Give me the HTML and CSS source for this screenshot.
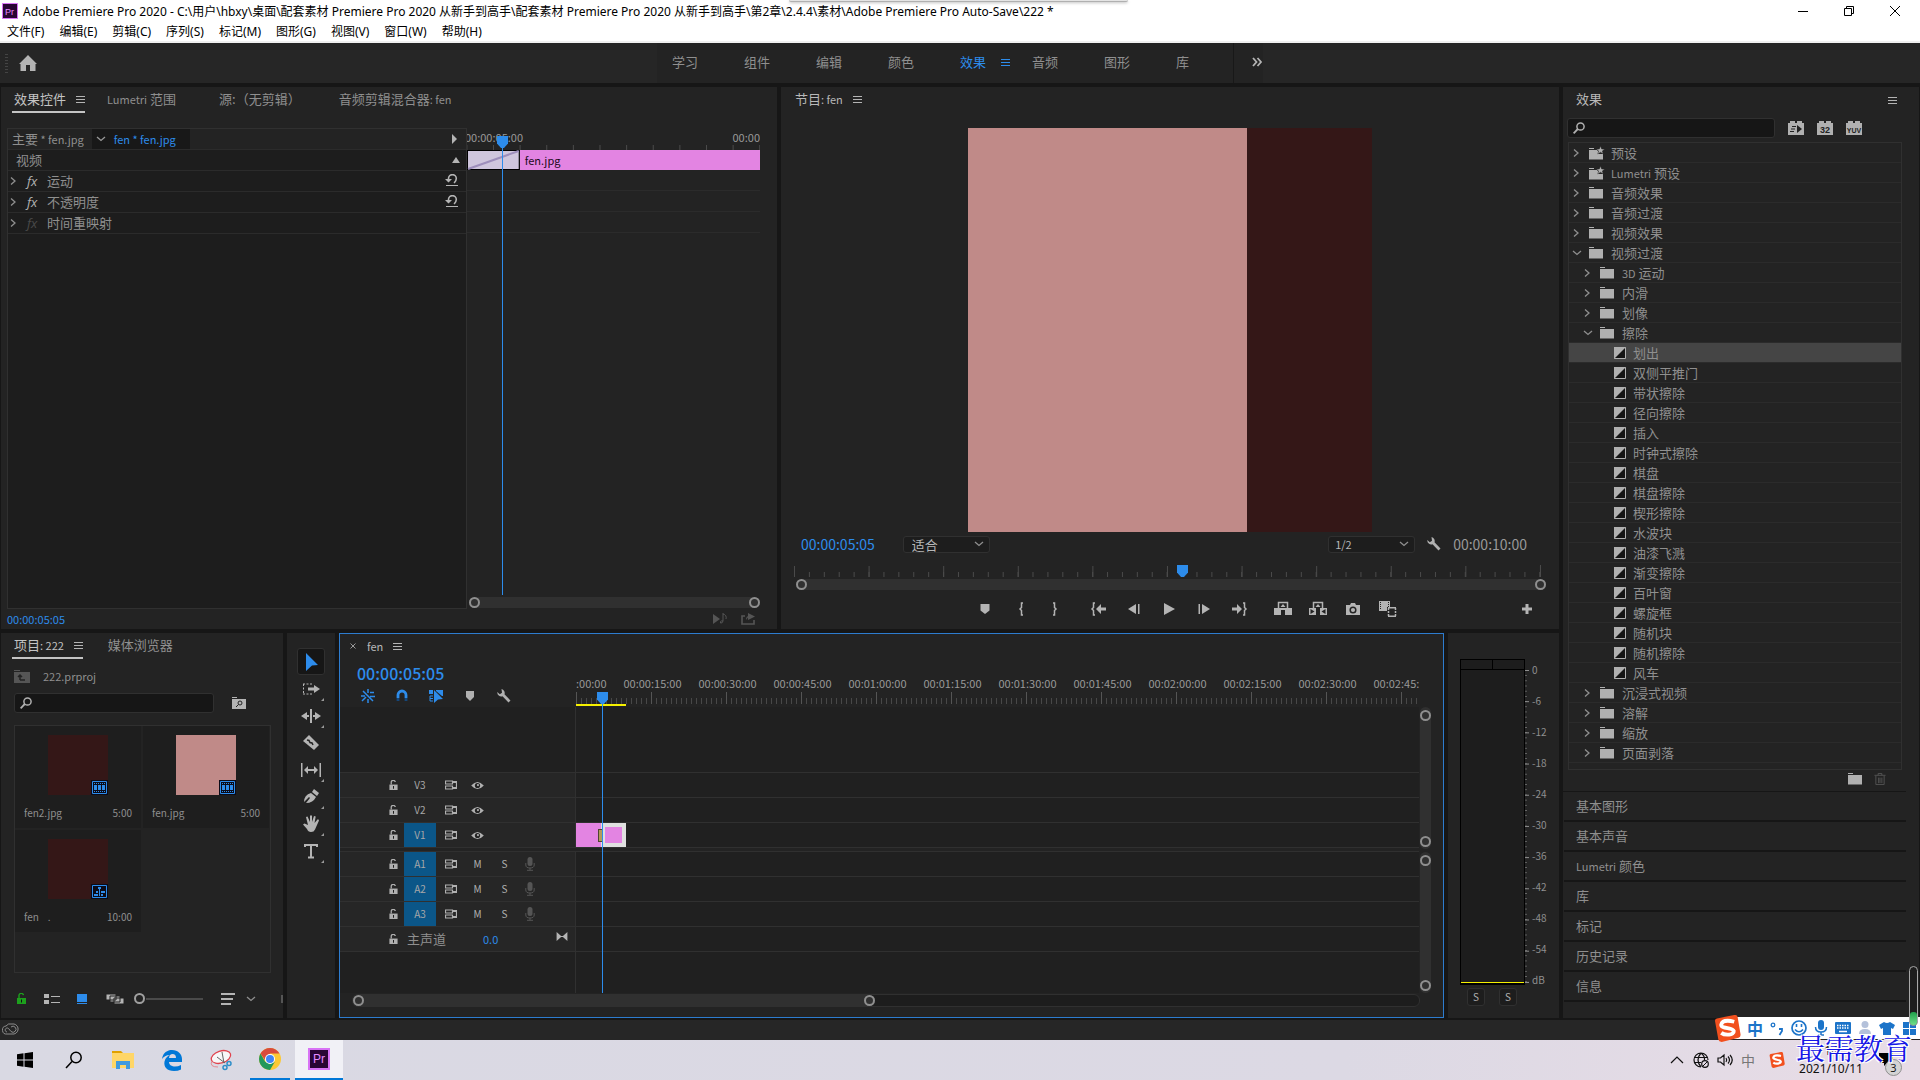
FILE: index.html
```html
<!DOCTYPE html>
<html lang="zh-CN">

<head>
  <meta charset="UTF-8">
  <meta name="viewport" content="width=device-width, initial-scale=1.0">
  <title>Adobe Premiere Pro 2020</title>
  <link rel="stylesheet" href="styles.css">
</head>

<body>
  <!-- icon sprite -->
  <svg class="sprite" aria-hidden="true">
    <symbol id="menu" viewBox="0 0 9 9"><path d="M0 1.5h9M0 4.5h9M0 7.5h9" stroke="currentColor" fill="none"/></symbol>
    <symbol id="right" viewBox="0 0 8 10"><path d="M2 1.5l4 3.5-4 3.5" stroke="currentColor" stroke-width="1.3" fill="none"/></symbol>
    <symbol id="down" viewBox="0 0 10 8"><path d="M1 2l4 3.500 4-3.500" stroke="currentColor" stroke-width="1.3" fill="none"/></symbol>
    <symbol id="folder" viewBox="0 0 14 12"><path d="M0 0h5v1H0zM0 2h14v9.500H0z" fill="currentColor"/></symbol>
    <symbol id="preset" viewBox="0 0 16 14"><path d="M0 2h5v1H0zM0 4h8l2 2v2h4v5.500H0z" fill="currentColor"/><path d="M11.500 0l1.200 3 3 .1-2.300 1.900.8 3-2.700-1.700L8.800 8l.8-3-2.300-1.900 3-.1z" fill="currentColor" stroke="#232323" stroke-width=".5"/></symbol>
    <symbol id="trans" viewBox="0 0 12 12"><path d="M.5.5h11v11H.5z" fill="#141414" stroke="currentColor"/><path d="M0 0h12L0 12z" fill="currentColor"/></symbol>
    <symbol id="search" viewBox="0 0 12 12"><circle cx="7.500" cy="4.500" r="3.600" stroke="currentColor" stroke-width="1.500" fill="none"/><path d="M4.800 7L.6 11.300" stroke="currentColor" stroke-width="1.800"/></symbol>
    <symbol id="reset" viewBox="0 0 14 12"><path d="M3.500 6V4.500a3.800 3.800 0 0 1 7.800 0c0 2-.8 3-2.200 4.500" stroke="currentColor" stroke-width="1.600" fill="none"/><path d="M0 5h7L3.500 8.500zM1 11h12v1H1z" fill="currentColor"/></symbol>
    <symbol id="wrench" viewBox="0 0 14 14"><path d="M4.500 0a4 4 0 0 1 3 5.200l6 6.300-2 2-6-6.300A4 4 0 0 1 .3 3l2.500 2.200L5 3.800 4.700 1.500z" fill="currentColor"/></symbol>
    <symbol id="marker" viewBox="0 0 10 10"><path d="M1 0h8v6L5 10 1 6z" fill="currentColor"/></symbol>
    <symbol id="head" viewBox="0 0 11 12"><path d="M0 0h11v7.500L7 12H4L0 7.500z" fill="currentColor"/></symbol>
    <symbol id="bin" viewBox="0 0 12 13"><path d="M0 2.500h12M4 2.500v-2h4v2M1.500 3v9.500h9V3M4.500 5v6M6 5v6M8 5v6" stroke="currentColor" fill="none"/></symbol>
    <symbol id="lock" viewBox="0 0 9 11"><path d="M0 5h9v6H0z" fill="currentColor"/><path d="M2 5V3a2.200 2.200 0 0 1 4.500-.8" stroke="currentColor" stroke-width="1.400" fill="none"/><path d="M4 6.500h1v3H4z" fill="#111"/></symbol>
    <symbol id="sync" viewBox="0 0 12 10"><path d="M.5 1h7v3h-7zM.5 6h7v3h-7zM7.500 1.500h4v7h-4" stroke="currentColor" stroke-width="1.200" fill="none"/><path d="M8 1h3.500v2H8zM8 7h3.500v2H8z" fill="currentColor"/></symbol>
    <symbol id="eye" viewBox="0 0 14 10"><path d="M0 5q7-8 14 0-7 8-14 0z" fill="currentColor"/><circle cx="7" cy="5" r="2.900" fill="#232323"/><circle cx="7.500" cy="4.500" r="1.200" fill="currentColor"/></symbol>
    <symbol id="mic" viewBox="0 0 10 14"><rect x="2.500" width="5" height="9" rx="2.500" fill="currentColor"/><path d="M.8 6v2q0 3 4.200 3t4.200-3V6M5 11v2M2 13.300h6" stroke="currentColor" fill="none"/></symbol>
    <symbol id="film" viewBox="0 0 17 15"><path d="M0 0h17v15H0z" fill="#0b0b18"/><path d="M1.500 1.500h14v12h-14z" stroke="currentColor" fill="none"/><path d="M3 5h3v5H3zM7 5h3v5H7zM11 5h3v5h-3z" fill="currentColor"/><path d="M3 3.500h11M3 11.500h11" stroke="currentColor" stroke-dasharray="1 1"/></symbol>
    <symbol id="seq" viewBox="0 0 17 15"><path d="M0 0h17v15H0z" fill="#0b0b18"/><path d="M1.500 1.500h14v12h-14z" stroke="currentColor" fill="none"/><path d="M7 3h3v2H9v7H8V5H7zM5 7h2v2H5zM10 7h4v2h-4zM3 10h4v2H3zM10 10h2v2h-2z" fill="currentColor"/></symbol>
    <symbol id="sogou" viewBox="0 0 28 28"><path d="M1 6Q1 4 3 3.500L21 0q3-.3 3.500 2l3 18q.3 3-2 3.500L8 28q-3 0-3.500-2.500z" fill="#f2501e"/><path d="M21 7Q9 4 7.500 10c-.5 4 12 3 13 6.500.5 4.500-9 5-13 2" stroke="#fff" stroke-width="4" fill="none"/></symbol>
  </svg>

  <header class="titlebar">
    <svg class="pr-mini" viewBox="0 0 16 16"><path d="M.5.5h15v15H.5z" fill="#2a0634" stroke="#d873f5"/><text x="3" y="12">Pr</text></svg>
    <h1>Adobe Premiere Pro 2020 - C:\用户\hbxy\桌面\配套素材 Premiere Pro 2020 从新手到高手\配套素材 Premiere Pro 2020 从新手到高手\第2章\2.4.4\素材\Adobe Premiere Pro Auto-Save\222 *</h1>
    <div class="win-buttons">
      <button type="button" aria-label="最小化"><svg viewBox="0 0 10 10"><path d="M0 5.500h10" stroke="#000"/></svg></button>
      <button type="button" aria-label="还原"><svg viewBox="0 0 10 10"><path d="M.5 2.500h7v7h-7zM2.500 2.500v-2h7v7h-2" stroke="#000" fill="none"/></svg></button>
      <button type="button" aria-label="关闭"><svg viewBox="0 0 10 10"><path d="M0 0l10 10M10 0L0 10" stroke="#000"/></svg></button>
    </div>
    <div class="dock-tab"></div>
  </header>
  <nav class="menubar">
    <button type="button">文件(F)</button>
    <button type="button">编辑(E)</button>
    <button type="button">剪辑(C)</button>
    <button type="button">序列(S)</button>
    <button type="button">标记(M)</button>
    <button type="button">图形(G)</button>
    <button type="button">视图(V)</button>
    <button type="button">窗口(W)</button>
    <button type="button">帮助(H)</button>
  </nav>

  <nav class="workspaces">
    <div class="home">
      <span class="grip"></span>
      <button type="button" aria-label="主页"><svg viewBox="0 0 18 16"><path d="M9 0l9 9h-1.500v7H11v-6H7v6H1.500V9H0z" fill="#b4b4b4"/></svg></button>
    </div>
    <div class="ws-tabs">
      <button type="button">学习</button>
      <button type="button">组件</button>
      <button type="button">编辑</button>
      <button type="button">颜色</button>
      <button type="button" class="active">效果<svg class="i-menu"><use href="#menu"/></svg></button>
      <button type="button">音频</button>
      <button type="button">图形</button>
      <button type="button">库</button>
      <button type="button" class="more" aria-label="更多"><svg viewBox="0 0 10 8"><path d="M1 0l3.500 4L1 8M5.500 0L9 4 5.500 8" stroke="#b4b4b4" stroke-width="1.800" fill="none"/></svg></button>
    </div>
  </nav>

  <main class="desk">
    <div class="left-area">
      <section class="panel effect-controls">
        <div class="tabs">
          <button type="button" class="active">效果控件<svg class="i-menu"><use href="#menu"/></svg></button>
          <button type="button" class="tab-lumetri"><span class="latin">Lumetri</span> 范围</button>
          <button type="button" class="tab-source">源:（无剪辑）</button>
          <button type="button" class="tab-mixer">音频剪辑混合器<span class="latin">: fen</span></button>
        </div>
        <div class="ec-body">
          <div class="ec-list">
            <div class="ec-row ec-clip">
              <span>主要<span class="latin"> * fen.jpg</span></span>
              <span class="ec-current"><svg class="i-down"><use href="#down"/></svg>fen * fen.jpg</span>
              <svg class="ec-tri" viewBox="0 0 8 10"><path d="M2 0l5 5-5 5z" fill="#b4b4b4"/></svg>
            </div>
            <div class="ec-row ec-video">视频<svg class="ec-tri" viewBox="0 0 8 10"><path d="M0 8l4-6 4 6z" fill="#b4b4b4"/></svg></div>
            <div class="ec-row"><svg class="i-right"><use href="#right"/></svg><i>fx</i>运动<svg class="i-reset"><use href="#reset"/></svg></div>
            <div class="ec-row"><svg class="i-right"><use href="#right"/></svg><i>fx</i>不透明度<svg class="i-reset"><use href="#reset"/></svg></div>
            <div class="ec-row"><svg class="i-right"><use href="#right"/></svg><i class="off">fx</i>时间重映射</div>
          </div>
          <div class="ec-time">
            <div class="ec-ruler"><span>00:00:05:00</span><span>00:00</span></div>
            <div class="ec-clips">
              <svg class="ec-transition" viewBox="0 0 52 20" preserveAspectRatio="none"><path d="M.5.5h51v19H.5z" fill="#cfc6dd" stroke="#000"/><path d="M1 19L51 1" stroke="#9d8ebb" stroke-width="2"/></svg>
              <span class="ec-clipbar">fen.jpg</span>
            </div>
            <div class="ec-lane"></div>
            <div class="ec-lane"></div>
            <div class="ec-lane"></div>
            <div class="ec-rest"></div>
            <div class="scroll"><span class="knob"></span><span class="knob"></span></div>
            <div class="playhead"><svg><use href="#head"/></svg></div>
          </div>
        </div>
        <div class="ec-foot">
          <span>00:00:05:05</span>
          <svg viewBox="0 0 14 12"><path d="M0 1l7 5-7 5z" fill="#555"/><path d="M10 0v8q-.5 2.500-2.500 2V8.500q1-1 2.500-.5M10 1q4 1 3 5" stroke="#555" fill="none"/></svg>
          <svg viewBox="0 0 14 12"><path d="M4 3H1v8h12V7" stroke="#555" stroke-width="1.600" fill="none"/><path d="M7 0l7 3.500-7 3.500zM5 7q0-4 3-4" fill="#555"/></svg>
        </div>
      </section>

      <section class="panel program">
        <div class="tabs">
          <button type="button" class="plain">节目<span class="latin">: fen</span><svg class="i-menu"><use href="#menu"/></svg></button>
        </div>
        <div class="monitor"><div class="frame"></div></div>
        <div class="pg-info">
          <span class="tc blue">00:00:05:05</span>
          <label class="select-box" aria-label="缩放级别"><select><option>适合</option></select><svg class="i-down"><use href="#down"/></svg></label>
          <label class="select-box res" aria-label="回放分辨率"><select><option>1/2</option></select><svg class="i-down"><use href="#down"/></svg></label>
          <button type="button" aria-label="设置"><svg class="i14"><use href="#wrench"/></svg></button>
          <span class="tc">00:00:10:00</span>
        </div>
        <div class="pg-ruler"><div class="playhead"><svg><use href="#head"/></svg></div></div>
        <div class="scroll"><span class="knob"></span><span class="knob"></span></div>
        <div class="transport">
          <div class="keys">
            <button type="button" aria-label="添加标记"><svg viewBox="0 0 20 16"><path d="M5.500 3h9v6.500L10 13 5.500 9.500z"/></svg></button>
            <button type="button" aria-label="标记入点"><svg viewBox="0 0 20 16"><path class="line" d="M13 2h-1.500v4.500L10 8l1.500 1.500V14H13"/></svg></button>
            <button type="button" aria-label="标记出点"><svg viewBox="0 0 20 16"><path class="line" d="M8 2h1.500v4.500L11 8 9.500 9.500V14H8"/></svg></button>
          </div>
          <div class="keys">
            <button type="button" aria-label="转到入点"><svg viewBox="0 0 20 16"><path class="line" d="M6 2H4.500v4.500L3 8l1.500 1.500V14H6"/><path d="M7 8l5-5v3.500h5v3h-5V13z"/></svg></button>
            <button type="button" aria-label="后退一帧"><svg viewBox="0 0 20 16"><path d="M4 8l8-5v10zM14 3h1.500v10H14z"/></svg></button>
            <button type="button" aria-label="播放"><svg viewBox="0 0 20 16"><path d="M5 2l11 6-11 6z"/></svg></button>
            <button type="button" aria-label="前进一帧"><svg viewBox="0 0 20 16"><path d="M16 8L8 3v10zM4.500 3H6v10H4.500z"/></svg></button>
            <button type="button" aria-label="转到出点"><svg viewBox="0 0 20 16"><path class="line" d="M14 2h1.500v4.500L17 8l-1.500 1.500V14H14"/><path d="M13 8L8 3v3.500H3v3h5V13z"/></svg></button>
          </div>
          <div class="keys">
            <button type="button" aria-label="提升"><svg viewBox="0 0 20 16"><path d="M1 7h7v7H1zM12 7h7v7h-7z"/><path class="line" d="M5.500 7V1.500h9V7"/><path d="M7.500 6L10 3l2.500 3zM8 7h4v2H8z"/></svg></button>
            <button type="button" aria-label="提取"><svg viewBox="0 0 20 16"><path d="M1 7h7v7H1zM12 7h7v7h-7z"/><path class="line" d="M5.500 7V1.500h9V7"/><path d="M7.500 6L10 3l2.500 3z"/><path fill="#232323" d="M2.500 8l4 2.500-4 2.500zM17.500 8l-4 2.500 4 2.500z"/></svg></button>
            <button type="button" aria-label="导出帧"><svg viewBox="0 0 20 16"><path d="M3 4h4l1-2h4l1 2h4v10H3z"/><circle cx="10" cy="9" r="2.800" fill="#b4b4b4" stroke="#232323" stroke-width="1.500"/></svg></button>
            <button type="button" aria-label="比较视图"><svg viewBox="0 0 20 16"><path d="M1 0h11v10H1z"/><path d="M2.500 1v8M10.500 1v8" stroke="#232323" stroke-dasharray="1 1"/><path d="M9 6h10v10H9z" fill="#232323"/><path class="line" d="M10.500 7v8.500M17.500 7v8.500" stroke-dasharray="2 1"/><path class="line" d="M10 6.700h8M10 15.300h8"/></svg></button>
          </div>
          <button type="button" class="add" aria-label="按钮编辑器"><svg viewBox="0 0 12 12"><path d="M4.500 1h3v3.500H11v3H7.500V11h-3V7.500H1v-3h3.500z"/></svg></button>
        </div>
      </section>

      <div class="bottom-row">
        <section class="panel project">
          <div class="tabs">
            <button type="button" class="active">项目<span class="latin">: 222</span><svg class="i-menu"><use href="#menu"/></svg></button>
            <button type="button" class="tab-media">媒体浏览器</button>
          </div>
          <div class="pj-path"><svg viewBox="0 0 16 13"><path d="M0 0h6v1H0zM0 2h16v11H0z" fill="#555"/><path d="M6 10V5M4 7l2-2 2 2M6 10h5" stroke="#222" fill="none" stroke-width="1.500"/></svg>222.prproj</div>
          <div class="pj-search">
            <label class="search-box" aria-label="搜索项目"><svg class="i12"><use href="#search"/></svg><input type="text"></label>
            <button type="button" aria-label="从查询创建新搜索素材箱"><svg viewBox="0 0 14 12"><path d="M0 0h5v1H0zM0 2h14v10H0z" fill="#b4b4b4"/><circle cx="8" cy="6" r="2" stroke="#222" fill="none"/><path d="M6.500 7.500L4 10" stroke="#222"/></svg></button>
          </div>
          <div class="pj-grid">
            <figure>
              <div class="thumb dark"><svg><use href="#film"/></svg></div>
              <figcaption><span>fen2.jpg</span><span>5:00</span></figcaption>
            </figure>
            <figure>
              <div class="thumb pink"><svg><use href="#film"/></svg></div>
              <figcaption><span>fen.jpg</span><span>5:00</span></figcaption>
            </figure>
            <figure>
              <div class="thumb dark"><svg><use href="#seq"/></svg></div>
              <figcaption><span>fen</span><span class="dot">.</span><span>10:00</span></figcaption>
            </figure>
          </div>
          <div class="pj-foot">
            <svg class="pj-lock"><use href="#lock"/></svg>
            <button type="button" aria-label="列表视图"><svg viewBox="0 0 16 12"><path d="M0 1h5v4H0zM0 7h5v4H0zM7 3h9v1H7zM7 9h9v1H7z" fill="#b4b4b4"/></svg></button>
            <button type="button" aria-label="图标视图"><svg viewBox="0 0 16 12"><path d="M2 1h10v8H2zM2 10h10v1H2z" fill="#2d8ceb"/></svg></button>
            <button type="button" aria-label="自由变换视图"><svg class="wide" viewBox="0 0 18 12"><path d="M0 1h10v6H0zM4 3h10v6H4zM8 5h10v6H8z" fill="#b4b4b4" stroke="#232323"/></svg></button>
            <input type="range" min="0" max="100" value="0" aria-label="缩放">
            <button type="button" aria-label="排序图标"><svg class="sort" viewBox="0 0 14 12"><path d="M0 1h14M0 6h12M0 11h10" stroke="#b4b4b4" stroke-width="1.800"/></svg></button>
            <svg class="i-down"><use href="#down"/></svg>
            <span class="stub"></span>
          </div>
        </section>

        <section class="panel tools">
          <button type="button" class="active" aria-label="选择工具"><svg viewBox="0 0 20 20"><path d="M5 1l12 12-6 .5L5 19z" fill="#2d8ceb"/></svg></button>
          <button type="button" class="sub" aria-label="向前选择轨道工具"><svg viewBox="0 0 20 20"><path d="M2 5h10M2 15h10M2.500 5v10" stroke="#b4b4b4" stroke-dasharray="2 1.500"/><path d="M7 8.500h6V6l6 4-6 4v-2.500H7z" fill="#b4b4b4"/></svg></button>
          <button type="button" class="sub" aria-label="波纹编辑工具"><svg viewBox="0 0 20 20"><path d="M9 3h2v14H9zM0 10l6-4v3h2v2H6v3zM20 10l-6-4v3h-2v2h2v3z" fill="#b4b4b4"/></svg></button>
          <button type="button" aria-label="剃刀工具"><svg viewBox="0 0 20 20"><path d="M8 2l10 10-5 5L2 8z" fill="#b4b4b4"/><path d="M6 7l2 .5 1 2 2 .5 1 2" stroke="#232323" stroke-width="1.500" fill="none"/></svg></button>
          <button type="button" class="sub" aria-label="外滑工具"><svg viewBox="0 0 20 20"><path d="M0 3h1.500v14H0zM18.500 3H20v14h-1.500zM3 10l4-4v3h6V6l4 4-4 4v-3H7v3z" fill="#b4b4b4"/></svg></button>
          <button type="button" class="sub" aria-label="钢笔工具"><svg viewBox="0 0 20 20"><path d="M13 2l5 4-2 3-5-4zM10 6l5 4q-3 6-10 6l4-5-1-1-5 5q0-7 7-9z" fill="#b4b4b4"/></svg></button>
          <button type="button" class="sub" aria-label="手形工具"><svg viewBox="0 0 20 20"><path d="M5 3l1.500-.5L9 8V1.500h2V8l2-6 1.700.5L13.500 9 17 5l1 1.500-4 9Q13 18 10 18 7 18 6 15L2 10.500l1.500-1L7 11z" fill="#b4b4b4"/></svg></button>
          <button type="button" class="sub" aria-label="文字工具"><svg viewBox="0 0 20 20"><path d="M4 6V4h12v2M10 4v12M7 16.500h6" stroke="#b4b4b4" stroke-width="2" fill="none"/></svg></button>
        </section>

        <section class="panel timeline">
          <div class="tl-tab"><button type="button" class="close" aria-label="关闭"><svg viewBox="0 0 6 6"><path d="M.5.5l5 5M5.500.5l-5 5" stroke="#999"/></svg></button><span>fen</span><svg class="i-menu"><use href="#menu"/></svg></div>
          <div class="tl-main">
            <div class="tl-rows">
              <div class="tl-top">
                <div class="tl-left">
                  <span class="tl-tc">00:00:05:05</span>
                  <div class="tl-icons">
                    <button type="button" aria-label="嵌套"><svg viewBox="0 0 14 14"><path d="M7 0v4M9 3.500h4M0 7h4M9 7.500h5M7 10v4M2 2l10 10M1 12l4-4" stroke="#2d8ceb" stroke-width="1.500"/></svg></button>
                    <button type="button" aria-label="对齐"><svg viewBox="0 0 14 14"><path d="M3 9V6a4 4 0 0 1 8 0v3" stroke="#2d8ceb" stroke-width="2.800" fill="none"/><path d="M1.600 9h2.800v3H1.600zM9.600 9h2.800v3H9.600z" fill="#15477a"/></svg></button>
                    <button type="button" aria-label="链接选择项"><svg viewBox="0 0 14 14"><path d="M0 1h4v4H0zM7 1h7v6h-1L7 2zM5 1l9 9-5 .5L5 14z" fill="#2d8ceb"/><path d="M4 7H1v5h3M1 9.500h3" stroke="#2d8ceb" fill="none"/></svg></button>
                    <button type="button" aria-label="添加标记"><svg class="mk"><use href="#marker"/></svg></button>
                    <button type="button" aria-label="时间轴显示设置"><svg><use href="#wrench"/></svg></button>
                  </div>
                </div>
                <div class="tl-ruler">
                  <div class="tl-labels">
                    <span>00:00:00:00</span><span>00:00:15:00</span><span>00:00:30:00</span><span>00:00:45:00</span><span>00:01:00:00</span><span>00:01:15:00</span><span>00:01:30:00</span><span>00:01:45:00</span><span>00:02:00:00</span><span>00:02:15:00</span><span>00:02:30:00</span><span>00:02:45:00</span>
                  </div>
                  <div class="tl-ticks"></div>
                  <div class="tl-work"></div>
                </div>
              </div>
              <div class="track space"><div class="th"></div><div class="lane"></div></div>
              <div class="track"><div class="th"><svg class="i-lock"><use href="#lock"/></svg><button type="button" class="name">V3</button><svg class="i-sync"><use href="#sync"/></svg><svg class="i-eye"><use href="#eye"/></svg></div><div class="lane"></div></div>
              <div class="track"><div class="th"><svg class="i-lock"><use href="#lock"/></svg><button type="button" class="name">V2</button><svg class="i-sync"><use href="#sync"/></svg><svg class="i-eye"><use href="#eye"/></svg></div><div class="lane"></div></div>
              <div class="track"><div class="th"><svg class="i-lock"><use href="#lock"/></svg><button type="button" class="name on">V1</button><svg class="i-sync"><use href="#sync"/></svg><svg class="i-eye"><use href="#eye"/></svg></div><div class="lane"><span class="clip"></span><span class="clip selected"></span><span class="wipe"></span></div></div>
              <div class="track split"></div>
              <div class="track"><div class="th"><svg class="i-lock"><use href="#lock"/></svg><button type="button" class="name on">A1</button><svg class="i-sync"><use href="#sync"/></svg><button type="button" class="ms">M</button><button type="button" class="ms">S</button><svg class="i-mic"><use href="#mic"/></svg></div><div class="lane"></div></div>
              <div class="track"><div class="th"><svg class="i-lock"><use href="#lock"/></svg><button type="button" class="name on">A2</button><svg class="i-sync"><use href="#sync"/></svg><button type="button" class="ms">M</button><button type="button" class="ms">S</button><svg class="i-mic"><use href="#mic"/></svg></div><div class="lane"></div></div>
              <div class="track"><div class="th"><svg class="i-lock"><use href="#lock"/></svg><button type="button" class="name on">A3</button><svg class="i-sync"><use href="#sync"/></svg><button type="button" class="ms">M</button><button type="button" class="ms">S</button><svg class="i-mic"><use href="#mic"/></svg></div><div class="lane"></div></div>
              <div class="track"><div class="th"><svg class="i-lock"><use href="#lock"/></svg><span class="master">主声道</span><span class="gain">0.0</span><svg class="i-fit" viewBox="0 0 12 10"><path d="M0 0l5 4.500h2L12 0v10L7 5.500H5L0 10z" fill="#b4b4b4"/></svg></div><div class="lane"></div></div>
              <div class="track tail"><div class="th"></div><div class="lane"></div></div>
              <div class="playhead"><svg><use href="#head"/></svg></div>
            </div>
            <div class="tl-vscroll">
              <div class="vscroll"><span class="knob"></span><span class="knob"></span></div>
              <div class="vscroll"><span class="knob"></span><span class="knob"></span></div>
            </div>
          </div>
          <div class="tl-hscroll"><div class="scroll"><span class="knob"></span><span class="knob"></span></div></div>
        </section>

        <section class="panel meters">
          <div class="meter">
            <div class="meter-box"><span></span><span></span><span></span><span></span></div>
            <div class="meter-ticks"></div>
            <div class="meter-scale"><span>0</span><span>-6</span><span>-12</span><span>-18</span><span>-24</span><span>-30</span><span>-36</span><span>-42</span><span>-48</span><span>-54</span><span>dB</span></div>
          </div>
          <div class="solo"><button type="button">S</button><button type="button">S</button></div>
        </section>
      </div>
    </div>

    <section class="panel effects">
      <div class="tabs"><button type="button" class="plain">效果</button><svg class="i-menu"><use href="#menu"/></svg></div>
      <div class="fx-search">
        <label class="search-box" aria-label="搜索效果"><svg class="i12"><use href="#search"/></svg><input type="text"></label>
        <button type="button" aria-label="加速效果"><svg viewBox="0 0 16 14"><path d="M0 2h2V0h5v2h2V0h5v2h2v12H0z" fill="#b0b0b0"/><path d="M9 4l5 4-5 4zM4 5h4v1H4zM3 7.500h4v1H3zM2 10h4v1H2z" fill="#222"/></svg></button>
        <button type="button" aria-label="32 位颜色"><svg viewBox="0 0 16 14"><path d="M0 2h2V0h5v2h2V0h5v2h2v12H0z" fill="#b0b0b0"/><text x="8" y="12">32</text></svg></button>
        <button type="button" aria-label="YUV 效果"><svg viewBox="0 0 16 14"><path d="M0 2h2V0h5v2h2V0h5v2h2v12H0z" fill="#b0b0b0"/><text x="8" y="12" class="yuv">YUV</text></svg></button>
      </div>
      <ul class="tree">
        <li><svg class="i-right"><use href="#right"/></svg><svg class="i-preset"><use href="#preset"/></svg>预设</li>
        <li><svg class="i-right"><use href="#right"/></svg><svg class="i-preset"><use href="#preset"/></svg><span class="latin">Lumetri</span>&nbsp;预设</li>
        <li><svg class="i-right"><use href="#right"/></svg><svg class="i-folder"><use href="#folder"/></svg>音频效果</li>
        <li><svg class="i-right"><use href="#right"/></svg><svg class="i-folder"><use href="#folder"/></svg>音频过渡</li>
        <li><svg class="i-right"><use href="#right"/></svg><svg class="i-folder"><use href="#folder"/></svg>视频效果</li>
        <li><svg class="i-down"><use href="#down"/></svg><svg class="i-folder"><use href="#folder"/></svg>视频过渡</li>
        <li class="l1"><svg class="i-right"><use href="#right"/></svg><svg class="i-folder"><use href="#folder"/></svg><span class="latin">3D</span>&nbsp;运动</li>
        <li class="l1"><svg class="i-right"><use href="#right"/></svg><svg class="i-folder"><use href="#folder"/></svg>内滑</li>
        <li class="l1"><svg class="i-right"><use href="#right"/></svg><svg class="i-folder"><use href="#folder"/></svg>划像</li>
        <li class="l1"><svg class="i-down"><use href="#down"/></svg><svg class="i-folder"><use href="#folder"/></svg>擦除</li>
        <li class="l2 selected"><svg class="i12"><use href="#trans"/></svg>划出</li>
        <li class="l2"><svg class="i12"><use href="#trans"/></svg>双侧平推门</li>
        <li class="l2"><svg class="i12"><use href="#trans"/></svg>带状擦除</li>
        <li class="l2"><svg class="i12"><use href="#trans"/></svg>径向擦除</li>
        <li class="l2"><svg class="i12"><use href="#trans"/></svg>插入</li>
        <li class="l2"><svg class="i12"><use href="#trans"/></svg>时钟式擦除</li>
        <li class="l2"><svg class="i12"><use href="#trans"/></svg>棋盘</li>
        <li class="l2"><svg class="i12"><use href="#trans"/></svg>棋盘擦除</li>
        <li class="l2"><svg class="i12"><use href="#trans"/></svg>楔形擦除</li>
        <li class="l2"><svg class="i12"><use href="#trans"/></svg>水波块</li>
        <li class="l2"><svg class="i12"><use href="#trans"/></svg>油漆飞溅</li>
        <li class="l2"><svg class="i12"><use href="#trans"/></svg>渐变擦除</li>
        <li class="l2"><svg class="i12"><use href="#trans"/></svg>百叶窗</li>
        <li class="l2"><svg class="i12"><use href="#trans"/></svg>螺旋框</li>
        <li class="l2"><svg class="i12"><use href="#trans"/></svg>随机块</li>
        <li class="l2"><svg class="i12"><use href="#trans"/></svg>随机擦除</li>
        <li class="l2"><svg class="i12"><use href="#trans"/></svg>风车</li>
        <li class="l1"><svg class="i-right"><use href="#right"/></svg><svg class="i-folder"><use href="#folder"/></svg>沉浸式视频</li>
        <li class="l1"><svg class="i-right"><use href="#right"/></svg><svg class="i-folder"><use href="#folder"/></svg>溶解</li>
        <li class="l1"><svg class="i-right"><use href="#right"/></svg><svg class="i-folder"><use href="#folder"/></svg>缩放</li>
        <li class="l1"><svg class="i-right"><use href="#right"/></svg><svg class="i-folder"><use href="#folder"/></svg>页面剥落</li>
      </ul>
      <div class="fx-foot">
        <button type="button" aria-label="新建自定义素材箱"><svg class="i-folder"><use href="#folder"/></svg></button>
        <button type="button" class="dim" aria-label="删除"><svg class="i12"><use href="#bin"/></svg></button>
      </div>
      <div class="stack">
        <button type="button">基本图形</button>
        <button type="button">基本声音</button>
        <button type="button"><span class="latin">Lumetri</span> 颜色</button>
        <button type="button">库</button>
        <button type="button">标记</button>
        <button type="button">历史记录</button>
        <button type="button">信息</button>
      </div>
    </section>
  </main>

  <div class="status"><svg viewBox="0 0 17 12"><path d="M5 11a4 4 0 0 1-1-8q2-3 6-2a5 5 0 0 1 2 10zM5 9a2 2 0 1 1 1.500-3.500L9 8.500A3 3 0 1 0 9 4" stroke="#8c8c8c" fill="none"/></svg></div>

  <footer class="taskbar">
    <div class="apps">
      <button type="button" aria-label="开始"><svg viewBox="0 0 22 22"><path d="M3 5.200l6.500-.9v6.200H3zM10.500 4.200L19 3v7.500h-8.500zM3 11.500h6.500v6.200L3 16.800zM10.500 11.500H19V19l-8.500-1.200z"/></svg></button>
      <button type="button" aria-label="搜索"><svg viewBox="0 0 22 22"><circle cx="13" cy="8.500" r="5.200" stroke="#000" stroke-width="1.500" fill="none"/><path d="M9 12.500L3 19" stroke="#000" stroke-width="1.500"/></svg></button>
      <button type="button" aria-label="文件资源管理器"><svg viewBox="0 0 22 22"><path d="M0 2h9l2 2H0z" fill="#e0a100"/><path d="M0 4h22v15H0z" fill="#ffd667"/><path d="M4 12h14v8h-4v-4H8v4H4z" fill="#3f9ae0"/></svg></button>
      <button type="button" aria-label="Edge"><svg viewBox="0 0 22 22"><path d="M1 10C2 3.500 6.500 1 11 1c6 0 10 4 10 9v3H8c0 3 3 4.500 6 4.500 2 0 4-.5 6-1.500v4.500q-3 1.500-7 1.500C6 22 2.500 18 3.500 12.500 4.200 9 7 6.500 9 6 5 6 2.500 8 1 10zm7-1h7q0-4-3.500-4Q8.500 5 8 9z" fill="#0078d7"/></svg></button>
      <button type="button" aria-label="截图工具"><svg viewBox="0 0 22 22"><ellipse cx="11" cy="8" rx="10" ry="6" transform="rotate(-18 11 8)" fill="#f7f7f7" stroke="#e0434d" stroke-width="1.300"/><path d="M2 12q-3 6 6 6" stroke="#e58a90" fill="none"/><path d="M7 8l8 6M12 3l2 11" stroke="#666"/><g stroke="#2f8fc9" stroke-width="1.500" fill="none"><circle cx="19" cy="14.500" r="2"/><circle cx="15" cy="18.500" r="2"/></g></svg></button>
      <button type="button" class="running" aria-label="Chrome"><svg viewBox="0 0 22 22"><circle cx="11" cy="11" r="11" fill="#fcc934"/><path d="M1.500 5.500A11 11 0 0 0 11 22l4.800-8.300L11 16 6.200 13.700z" fill="#23985a"/><path d="M1.500 5.500A11 11 0 0 1 20.500 5.500H11L6 12z" fill="#d84b3c"/><circle cx="11" cy="11" r="5" fill="#fff"/><circle cx="11" cy="11" r="4" fill="#4285f4"/></svg></button>
      <button type="button" class="running current" aria-label="Premiere Pro"><svg class="pr" viewBox="0 0 22 22"><path d="M1 1h20v20H1z" fill="#2a0634" stroke="#d873f5" stroke-width="2"/><text x="5" y="15">Pr</text></svg></button>
    </div>
    <div class="tray">
      <svg viewBox="0 0 16 16"><path d="M2 11l6-6 6 6" stroke="#111" fill="none" stroke-width="1.200"/></svg>
      <svg viewBox="0 0 16 16"><path d="M8 15A7 7 0 1 1 15 8M8 15Q2 8 8 1q4 3 3.500 7M1 5.500h13M1 10.500h7" stroke="#111" fill="none" stroke-width="1.200"/><circle cx="12" cy="12" r="3.300" stroke="#111" fill="none" stroke-width="1.200"/><path d="M10 14l4-4" stroke="#111"/></svg>
      <svg viewBox="0 0 16 16"><path d="M1 6h2.500L7 3v10l-3.500-3H1zM9 6q1.500 2 0 4M11 4.500q3 3.500 0 7M13 3q4.500 5 0 10" stroke="#111" fill="none" stroke-width="1.200"/></svg>
      <span class="ime">中</span>
      <svg class="sg"><use href="#sogou"/></svg>
      <time datetime="2021-10-11"><span>14</span><span>2021/10/11</span></time>
      <div class="notice"><svg viewBox="0 0 16 16"><path d="M1 1h14v10H9l-3 3v-3H1z"/></svg><b>3</b></div>
    </div>
  </footer>

  <!-- floating input method bar -->
  <div class="ime-bar">
    <svg class="ime-logo"><use href="#sogou"/></svg>
    <b>中</b>
    <svg viewBox="0 0 16 16"><circle cx="4" cy="5" r="1.800" stroke="#1c74c9" stroke-width="1.300" fill="none"/><path d="M10 9h3v2l-2.500 4" stroke="#1c74c9" stroke-width="1.800" fill="none"/></svg>
    <svg viewBox="0 0 16 16"><circle cx="8" cy="8" r="7" stroke="#1c74c9" stroke-width="1.700" fill="none"/><path d="M5.500 4v3M10.500 4v3M4 9.500q4 4.500 8 0" stroke="#1c74c9" stroke-width="1.600" fill="none"/></svg>
    <svg viewBox="0 0 16 16"><rect x="5" width="6" height="10" rx="3" fill="#1c74c9"/><path d="M2.500 7q0 5 5.500 5t5.500-5M8 12v3M5 15h6" stroke="#1c74c9" stroke-width="1.500" fill="none"/></svg>
    <svg viewBox="0 0 16 16"><rect y="2" width="16" height="12" rx="1" fill="#1c74c9"/><path d="M2 5.500h12M2 8h12" stroke="#fff" stroke-width="1.500" stroke-dasharray="1.500 1"/><path d="M4 11.500h8" stroke="#fff" stroke-width="1.500"/></svg>
    <svg viewBox="0 0 16 16"><circle cx="8" cy="4.500" r="3.500" fill="#b4c1da"/><path d="M2 14q0-5 6-5t6 5z" fill="#b4c1da"/></svg>
    <svg viewBox="0 0 16 16"><path d="M5 2q3 2 6 0l5 3-2 4-2-1v7H4V8L2 9 0 5z" fill="#1c74c9"/></svg>
    <svg viewBox="0 0 16 16"><path d="M2 2h6v6H2zM9 2h6v6H9zM2 9h6v6H2zM9 9h6v6H9z" fill="#1c74c9"/></svg>
  </div>
  <div class="level"><span></span></div>
  <div class="watermark">最需教育</div>
</body>

</html>
```

FILE: styles.css
```css
* {
  box-sizing: border-box;
}

body {
  display: flex;
  flex-direction: column;
  height: 100vh;
  margin: 0;
  overflow: hidden;
  background: #161616;
  color: #8f8f8f;
  font: 13px/20px "Noto Sans CJK SC", sans-serif;
}

button,
input,
select {
  margin: 0;
  padding: 0;
  border: 0;
  outline: 0;
  background: none;
  color: inherit;
  font: inherit;
}

svg {
  display: block;
  flex: none;
  overflow: visible;
}

.sprite {
  position: absolute;
  width: 0;
  height: 0;
}

.latin {
  font-size: 11px;
}

.i-menu {
  width: 9px;
  height: 9px;
  color: #b4b4b4;
}

.i-right {
  width: 8px;
  height: 10px;
}

.i-down {
  width: 10px;
  height: 8px;
}

.i-folder {
  width: 14px;
  height: 12px;
  color: #b0b0b0;
}

.i-preset {
  width: 16px;
  height: 14px;
  color: #b0b0b0;
}

.i12 {
  width: 12px;
  height: 12px;
  color: #b0b0b0;
}

.i14 {
  width: 14px;
  height: 14px;
  color: #b0b0b0;
}

/* window chrome */
.titlebar {
  display: flex;
  align-items: center;
  flex: none;
  height: 22px;
  padding-left: 2px;
  background: #fff;
  color: #000;
}

.pr-mini {
  width: 16px;
  height: 16px;
}

.pr-mini text {
  fill: #e58bff;
  font: 9px "Liberation Sans", sans-serif;
}

.titlebar h1 {
  flex: 1;
  margin: 0 0 0 5px;
  padding-top: 1px;
  font: 12px/20px "Noto Sans", "Noto Sans CJK SC", sans-serif;
  white-space: nowrap;
}

.win-buttons {
  display: flex;
  margin-right: 2px;
}

.win-buttons button {
  display: flex;
  justify-content: center;
  width: 46px;
}

.win-buttons svg {
  width: 10px;
  height: 10px;
}

.dock-tab {
  position: absolute;
  top: 0;
  left: 789px;
  width: 339px;
  height: 2px;
  border-bottom: 1px solid #b0b0b0;
  border-radius: 0 0 4px 4px;
  background: #e4e4e4;
  box-shadow: 0 1px 3px #bbb;
}

.menubar {
  display: flex;
  flex: none;
  gap: 15px;
  height: 21px;
  padding-left: 7px;
  border-bottom: 2px solid #f0f0f0;
  background: #fff;
  color: #000;
  font: 12px/20px "Noto Sans", "Noto Sans CJK SC", sans-serif;
}

.workspaces {
  display: grid;
  grid-template-columns: 1fr auto 1fr;
  flex: none;
  height: 40px;
  margin-bottom: 4px;
  background: #262626;
}

.home {
  display: flex;
  align-items: center;
  gap: 11px;
  padding-left: 5px;
}

.home svg {
  width: 18px;
  height: 16px;
}

.grip {
  width: 3px;
  height: 19px;
  background: repeating-linear-gradient(#444 0 1px, transparent 1px 3px);
}

.ws-tabs {
  display: flex;
  background: #232323;
}

.ws-tabs button {
  display: flex;
  align-items: center;
  gap: 15px;
  width: 72px;
  padding: 0 0 2px 15px;
}

.ws-tabs .active,
.ws-tabs .active svg {
  color: #2d8ceb;
}

.ws-tabs .more {
  width: 30px;
  padding-left: 18px;
  border-left: 1px solid #181818;
}

.more svg {
  width: 10px;
  height: 8px;
}

/* panel grid */
.desk {
  display: grid;
  grid-template-columns: 1fr 356px;
  flex: 1;
  gap: 4px;
  min-height: 0;
  padding: 0 1px;
}

.left-area {
  display: grid;
  grid-template-columns: 776fr 778fr;
  grid-template-rows: 542fr 385fr;
  gap: 4px;
  min-width: 0;
  min-height: 0;
}

.panel {
  display: flex;
  flex-direction: column;
  min-width: 0;
  min-height: 0;
  background: #232323;
}

.tabs {
  display: flex;
  flex: none;
  height: 26px;
  padding-left: 11px;
}

.tabs button {
  display: flex;
  align-items: center;
  padding: 0 0 0 2px;
  border-bottom: 2px solid transparent;
  white-space: pre;
}

.tabs button .i-menu {
  margin-left: 10px;
}

.tabs .active {
  border-color: #c4c4c4;
  color: #c4c4c4;
}

.tabs .plain {
  color: #b8b8b8;
}

.tabs .tab-lumetri {
  margin-left: 20px;
}

.tabs .tab-source {
  margin-left: 41px;
}

.tabs .tab-mixer {
  margin-left: 36px;
}

.tabs .tab-media {
  margin-left: 23px;
}

.knob {
  flex: none;
  width: 11px;
  height: 11px;
  border: 2px solid #8f8f8f;
  border-radius: 50%;
}

.scroll {
  display: flex;
  justify-content: space-between;
  height: 11px;
  border-radius: 6px;
  background: #303030;
}

.playhead {
  position: absolute;
  width: 1px;
  background: #2d8ceb;
}

.playhead svg {
  width: 11px;
  height: 12px;
  margin-left: -5px;
  color: #2d8ceb;
}

/* effect controls */
.ec-body {
  display: grid;
  grid-template-columns: 460fr 293fr;
  flex: 1;
  margin: 15px 17px 0 6px;
  min-height: 0;
}

.ec-list {
  border: 1px solid #303030;
  background: #1d1d1d;
}

.ec-row {
  display: flex;
  align-items: center;
  height: 21px;
  padding: 0 7px 0 1px;
  border-bottom: 1px solid #2b2b2b;
}

.ec-row i {
  width: 20px;
  margin-left: 10px;
  color: #b4b4b4;
  font: italic 13px "Open Sans", sans-serif;
}

.ec-row i.off {
  color: #4a4a4a;
}

.ec-row .i-reset {
  width: 14px;
  height: 12px;
  margin: 0 0 3px auto;
  color: #b4b4b4;
}

.ec-clip {
  gap: 8px;
  padding: 0 8px 0 4px;
  background: #232323;
}

.ec-current {
  display: flex;
  align-items: center;
  gap: 8px;
  height: 20px;
  padding: 0 14px 0 4px;
  background: #181818;
  color: #2d8ceb;
  font-size: 11px;
}

.ec-current svg {
  color: #999;
}

.ec-tri {
  width: 8px;
  height: 10px;
  margin-left: auto;
}

.ec-row.ec-video {
  padding: 0 6px 0 8px;
}

.ec-time {
  position: relative;
  display: flex;
  flex-direction: column;
  min-width: 0;
}

.ec-ruler {
  display: flex;
  justify-content: space-between;
  height: 22px;
  overflow: hidden;
  background: linear-gradient(90deg, #4a4a4a 1px, transparent 1px) 26px 100% / calc(100% / 11) 5px repeat-x;
  color: #999;
  font-size: 11px;
  line-height: 18px;
}

.ec-ruler span:first-child {
  margin-left: -2px;
}

.ec-clips {
  display: flex;
  height: 20px;
}

.ec-transition {
  width: 18%;
  height: 20px;
}

.ec-clipbar {
  flex: 1;
  height: 20px;
  padding-left: 5px;
  background: #e384e2;
  color: #1a0a1a;
  font-size: 11px;
}

.ec-lane {
  height: 21px;
  border-bottom: 1px solid #2b2b2b;
}

.ec-rest {
  flex: 1;
}

.ec-time .playhead {
  top: 8px;
  bottom: 14px;
  left: 12%;
}

.ec-time .scroll {
  margin: 0 0 1px 2px;
}

.ec-foot {
  display: flex;
  align-items: center;
  gap: 14px;
  flex: none;
  height: 20px;
  padding: 0 22px 0 6px;
  color: #2d8ceb;
  font-size: 11px;
}

.ec-foot span {
  flex: 1;
}

.ec-foot svg {
  width: 14px;
  height: 12px;
}

/* program monitor */
.program .tabs {
  padding-left: 12px;
}

.monitor {
  flex: 1;
  margin-top: 15px;
  min-height: 0;
}

.frame {
  height: 100%;
  margin: 0 auto;
  aspect-ratio: 1;
  background: linear-gradient(90deg, #c08a88 69%, #341717 69%);
}

.pg-info {
  display: flex;
  align-items: center;
  flex: none;
  height: 26px;
  padding: 0 32px 2px 20px;
}

.tc {
  color: #999;
  font-size: 14px;
}

.blue {
  color: #2d8ceb;
}

.select-box {
  display: flex;
  align-items: center;
  width: 87px;
  height: 17px;
  margin-left: 28px;
  padding-right: 5px;
  border: 1px solid #303030;
  border-radius: 3px;
  background: #1d1d1d;
}

.select-box.res {
  margin: 0 12px 0 auto;
  font-size: 11px;
}

.select-box select {
  flex: 1;
  padding-left: 8px;
  color: #b8b8b8;
  line-height: 15px;
  appearance: none;
}

.select-box.res select {
  padding-left: 6px;
}

.pg-info button {
  margin-right: 12px;
}

.pg-ruler {
  position: relative;
  flex: none;
  height: 12px;
  margin: 7px 18px 2px 13px;
  border-right: 1px solid #4a4a4a;
  background:
    linear-gradient(90deg, #4a4a4a 1px, transparent 1px) 0 100% / 10% 11px repeat-x,
    linear-gradient(90deg, #4a4a4a 1px, transparent 1px) 0 100% / 2% 5px repeat-x;
}

.pg-ruler .playhead {
  left: 52%;
}

.program .scroll {
  flex: none;
  margin: 0 13px 0 15px;
}

.transport {
  position: relative;
  display: flex;
  align-items: center;
  justify-content: center;
  gap: 9px;
  flex: none;
  height: 37px;
  margin: 0 0 2px 32px;
}

.keys {
  display: flex;
}

.keys button {
  display: flex;
  justify-content: center;
  width: 35px;
}

.keys svg {
  width: 20px;
  height: 16px;
}

.transport svg {
  fill: #b4b4b4;
}

.transport .line {
  fill: none;
  stroke: #b4b4b4;
  stroke-width: 1.500;
}

.transport .add {
  position: absolute;
  right: 26px;
}

.add svg {
  width: 12px;
  height: 12px;
}

/* bottom row */
.bottom-row {
  display: grid;
  grid-column: 1 / 3;
  grid-template-columns: 282px 48px 1fr 111px;
  gap: 4px;
  min-width: 0;
  min-height: 0;
}

.pj-path {
  display: flex;
  align-items: center;
  gap: 13px;
  height: 34px;
  padding-left: 13px;
  font-size: 11px;
}

.pj-path svg {
  width: 16px;
  height: 13px;
}

.pj-search {
  display: flex;
  align-items: center;
  gap: 18px;
  padding-left: 13px;
}

.search-box {
  display: flex;
  align-items: center;
  gap: 6px;
  width: 200px;
  height: 20px;
  padding-left: 5px;
  border: 1px solid #303030;
  border-radius: 3px;
  background: #161616;
}

.search-box input {
  flex: 1;
  min-width: 0;
}

.pj-search button svg {
  width: 14px;
  height: 12px;
}

.pj-grid {
  display: grid;
  grid-template-columns: 126px 126px;
  grid-auto-rows: 102px;
  flex: 1;
  gap: 2px;
  min-height: 0;
  margin: 12px 12px 0 13px;
  border: 1px solid #303030;
}

.pj-grid figure {
  margin: 0;
  padding: 9px 9px 0 9px;
  background: #1e1e1e;
}

.thumb {
  display: flex;
  align-items: flex-end;
  justify-content: flex-end;
  width: 60px;
  height: 60px;
  margin: 0 auto;
}

.thumb.dark {
  background: #341717;
}

.thumb.pink {
  background: #c08a88;
}

.thumb svg {
  width: 17px;
  height: 15px;
  color: #2d8ceb;
}

figcaption {
  display: flex;
  justify-content: space-between;
  padding-top: 8px;
  font-size: 10px;
}

.dot {
  flex: 1;
  padding-left: 9px;
}

.pj-foot {
  display: flex;
  align-items: center;
  flex: none;
  height: 45px;
  padding-top: 6px;
  padding-left: 16px;
}

.pj-foot svg {
  width: 16px;
  height: 12px;
}

.pj-foot button {
  margin-right: 15px;
}

.pj-foot .pj-lock {
  width: 9px;
  height: 11px;
  margin-right: 18px;
  color: #1da01d;
}

.pj-foot .wide {
  width: 18px;
}

.pj-foot .sort {
  width: 14px;
}

.pj-foot .i-down {
  width: 10px;
  height: 8px;
  margin-left: -4px;
}

.pj-foot input {
  width: 69px;
  height: 11px;
  margin: 0 18px 0 -5px;
  appearance: none;
}

.pj-foot input::-webkit-slider-runnable-track {
  height: 11px;
  background: linear-gradient(#4a4a4a, #4a4a4a) 12px 5px / 100% 2px no-repeat;
}

.pj-foot input::-webkit-slider-thumb {
  width: 11px;
  height: 11px;
  border: 2px solid #a0a0a0;
  border-radius: 50%;
  background: #232323;
  appearance: none;
}

.stub {
  width: 2px;
  height: 8px;
  margin-left: auto;
  background: #555;
}

.tools {
  align-items: center;
  padding-top: 15px;
}

.tools button {
  display: flex;
  align-items: center;
  justify-content: center;
  width: 28px;
  height: 27px;
}

.tools .active {
  border: 1px solid #303030;
  border-radius: 3px;
  background: #161616;
}

.tools svg {
  width: 20px;
  height: 20px;
}

.tools .sub::after {
  align-self: flex-end;
  width: 0;
  margin: 0 -3px 1px 0;
  border-bottom: 3px solid #999;
  border-left: 3px solid transparent;
  content: "";
}

/* timeline */
.timeline {
  border: 1px solid #2d7ccf;
}

.tl-tab {
  display: flex;
  align-items: center;
  flex: none;
  height: 26px;
  padding: 0 0 2px 10px;
  color: #b8b8b8;
  font-size: 11px;
}

.tl-tab span {
  margin: 0 10px 0 11px;
}

.close svg {
  width: 6px;
  height: 6px;
}

.tl-main {
  display: flex;
  flex: 1;
  min-height: 0;
}

.tl-rows {
  position: relative;
  display: flex;
  flex: 1;
  flex-direction: column;
  min-width: 0;
}

.tl-top {
  display: flex;
  flex: none;
  height: 47px;
}

.tl-left {
  flex: none;
  width: 236px;
  padding: 3px 0 0 17px;
}

.tl-tc {
  color: #2d8ceb;
  font-size: 16px;
  line-height: 20px;
  font-weight: 500;
}

.tl-icons {
  display: flex;
  gap: 20px;
  padding: 4px 0 0 4px;
}

.tl-icons svg {
  width: 14px;
  height: 14px;
  color: #b0b0b0;
}

.tl-icons .mk {
  height: 10px;
}

.tl-ruler {
  flex: 1;
  min-width: 0;
  padding-top: 14px;
  overflow: hidden;
}

.tl-labels {
  display: flex;
  margin-left: -36px;
  color: #999;
  font-size: 11px;
}

.tl-labels span {
  flex: none;
  width: 75px;
  line-height: 18px;
  text-align: center;
}

.tl-labels span:first-child {
  clip-path: inset(0 0 0 36px);
}

.tl-ticks {
  height: 12px;
  background:
    linear-gradient(90deg, #555 1px, transparent 1px) 0 0 / 75px 12px repeat-x,
    linear-gradient(90deg, #484848 1px, transparent 1px) 0 100% / 5px 6px repeat-x;
}

.tl-work {
  width: 50px;
  height: 2px;
  background: #f5f000;
}

.track {
  display: flex;
  flex: none;
  height: 25px;
  border-bottom: 1px solid #303030;
}

.track.space {
  flex: 66 0 0;
}

.track.tail {
  flex: 41 0 0;
  border-bottom: 0;
}

.track.split {
  height: 4px;
}

.th {
  display: flex;
  align-items: center;
  flex: none;
  width: 236px;
  padding-left: 49px;
  border-right: 1px solid #303030;
  background: #262626;
  font-size: 10px;
}

.space .th,
.tail .th,
.lane {
  background: #202020;
}

.lane {
  display: flex;
  flex: 1;
}

.i-lock {
  width: 9px;
  height: 10px;
  color: #b0b0b0;
}

.name {
  width: 32px;
  height: 24px;
  margin: 0 9px 0 6px;
  color: #a8a8a8;
}

.name.on {
  background: #0b5688;
}

.i-sync {
  width: 12px;
  height: 10px;
  margin-right: 14px;
  color: #b0b0b0;
}

.i-eye {
  width: 13px;
  height: 9px;
  color: #b0b0b0;
}

.ms {
  width: 13px;
  margin-right: 14px;
  color: #b0b0b0;
}

.i-mic {
  width: 10px;
  height: 14px;
  color: #555;
}

.master {
  width: 76px;
  margin-left: 9px;
  font-size: 13px;
}

.gain {
  color: #2d8ceb;
  font-size: 11px;
}

.i-fit {
  width: 12px;
  height: 9px;
  margin: 0 7px 6px auto;
}

.clip {
  width: 25px;
  background: #e384e2;
}

.clip.selected {
  border: 4px solid #e0e0e0;
}

.wipe {
  width: 5px;
  height: 13px;
  margin: 6px 0 0 -28px;
  border: 1px solid #4e4430;
  background: #b39a5a;
}

.tl-rows .playhead {
  top: 32px;
  bottom: 0;
  left: 262px;
}

.tl-vscroll {
  display: flex;
  flex-direction: column;
  gap: 3px;
  width: 11px;
  margin: 47px 12px 0 1px;
}

.vscroll {
  display: flex;
  flex: 1;
  flex-direction: column;
  justify-content: space-between;
  padding: 3px 0 2px;
  border-radius: 6px;
  background: #303030;
}

.tl-hscroll {
  flex: none;
  margin: 1px 23px 10px 12px;
  border: 1px solid #303030;
  border-radius: 6px;
  background: #1d1d1d;
}

.tl-hscroll .scroll {
  width: 49%;
  height: 11px;
}

/* audio meters */
.meters {
  padding: 26px 0 12px 12px;
}

.meter {
  display: flex;
  flex: 1;
}

.meter-box {
  display: grid;
  grid-template-columns: 1fr 1fr;
  grid-template-rows: 9px 1fr;
  gap: 1px;
  width: 65px;
  padding: 1px 1px 2px;
  background: #000;
}

.meter-box span {
  background: #1d1d1d;
}

.meter-box span:nth-child(n + 3) {
  border-bottom: 1px solid #f5f000;
}

.meter-box span:nth-child(3) {
  margin-right: -1px;
}

.meter-ticks {
  width: 4px;
  margin: 11px 3px 2px 0;
  border-bottom: 1px solid #8f8f8f;
  background:
    linear-gradient(#8f8f8f 1px, transparent 1px) 0 0 / 4px 10% repeat-y,
    linear-gradient(#666 1px, transparent 1px) 0 0 / 2px calc(100% / 60) repeat-y;
}

.meter-scale {
  display: flex;
  flex-direction: column;
  justify-content: space-between;
  margin-top: 5px;
  font-size: 10px;
  line-height: 11px;
}

.solo {
  display: flex;
  gap: 14px;
  padding: 3px 0 0 7px;
}

.solo button {
  width: 18px;
  height: 18px;
  border: 1px solid #303030;
  border-radius: 3px;
  background: #1d1d1d;
  color: #b0b0b0;
  font-size: 10px;
  line-height: 14px;
}

/* effects panel */
.effects .tabs {
  justify-content: space-between;
  align-items: center;
  padding: 0 22px 0 11px;
}

.fx-search {
  display: flex;
  align-items: center;
  flex: none;
  gap: 13px;
  padding: 5px 0 4px 4px;
}

.fx-search .search-box {
  width: 208px;
}

.fx-search button svg {
  width: 16px;
  height: 14px;
}

.fx-search text {
  fill: #222;
  font: bold 9px "Liberation Sans", sans-serif;
  text-anchor: middle;
}

.fx-search .yuv {
  font-size: 7px;
}

.tree {
  flex: none;
  margin: 0 17px 0 5px;
  padding: 0 0 6px;
  border: 1px solid #303030;
  list-style: none;
}

.tree li {
  display: flex;
  align-items: center;
  height: 20px;
  padding-left: 3px;
  border-bottom: 1px solid #2b2b2b;
  line-height: 18px;
}

.tree .l1 {
  padding-left: 14px;
}

.tree .l2 {
  padding-left: 45px;
  line-height: 16px;
}

.tree .selected {
  background: #454545;
}

.tree .i-right {
  margin-right: 9px;
}

.tree .i-down {
  margin-right: 7px;
}

.tree .i-folder {
  margin-right: 8px;
}

.tree .i-preset {
  margin-right: 6px;
}

.tree .i12 {
  margin-right: 7px;
}

.fx-foot {
  display: flex;
  gap: 12px;
  align-items: center;
  justify-content: flex-end;
  flex: none;
  height: 22px;
  margin-right: 13px;
  padding: 0 20px 3px 0;
  border-bottom: 1px solid #161616;
}

.fx-foot .dim svg {
  color: #555;
}

.stack {
  display: flex;
  flex-direction: column;
  margin: 0 13px 0 1px;
}

.stack button {
  height: 30px;
  padding-left: 12px;
  border-bottom: 2px solid #161616;
  text-align: left;
}

/* bottom bars */
.status {
  display: flex;
  flex: none;
  align-items: center;
  height: 20px;
  margin-top: 2px;
  padding: 0 0 3px 2px;
  background: #262626;
}

.status svg {
  width: 17px;
  height: 12px;
}

.taskbar {
  display: flex;
  justify-content: space-between;
  flex: none;
  height: 40px;
  background: linear-gradient(90deg, #d9d9e3, #dcd9e4 70%, #e8dce6);
  color: #111;
}

.apps {
  display: flex;
}

.apps button {
  display: flex;
  align-items: center;
  justify-content: center;
  width: 49px;
}

.apps svg {
  width: 22px;
  height: 22px;
}

.apps .running {
  width: 40px;
  margin-left: 5px;
  border-bottom: 2px solid #0078d7;
}

.apps .current {
  width: 48px;
  background: #f1f1f6;
}

.pr text {
  fill: #e58bff;
  font: 12px "Liberation Sans", sans-serif;
}

.tray {
  display: flex;
  align-items: center;
  gap: 8px;
  padding-right: 18px;
}

.tray svg {
  width: 16px;
  height: 16px;
}

.tray .ime {
  color: #777;
  font-size: 14px;
}

.tray .sg {
  margin: 0 3px 0 6px;
}

.tray time {
  display: flex;
  flex-direction: column;
  width: 70px;
  font: 12px/18px "Noto Sans", sans-serif;
  text-align: center;
}

.notice {
  display: flex;
  align-items: flex-end;
  padding-left: 4px;
}

.notice b {
  width: 17px;
  height: 17px;
  margin: 0 0 -8px -9px;
  border: 1px solid #8f8f8f;
  border-radius: 50%;
  background: #d4d4d4;
  font: 11px/15px "Open Sans", sans-serif;
  text-align: center;
}

.ime-bar {
  position: absolute;
  right: 0;
  bottom: 41px;
  display: flex;
  align-items: center;
  gap: 6px;
  width: 206px;
  height: 22px;
  padding-right: 6px;
  background: linear-gradient(90deg, transparent 20px, #fff 20px);
  color: #1c74c9;
}

.ime-bar svg {
  width: 16px;
  height: 16px;
}

.ime-bar .ime-logo {
  width: 27px;
  height: 27px;
}

.ime-bar b {
  font-size: 16px;
}

.level {
  position: absolute;
  right: 2px;
  bottom: 54px;
  display: flex;
  align-items: flex-end;
  width: 9px;
  height: 60px;
  border: 1px solid #a8a8a8;
  border-radius: 5px;
  background: #1d1d1d;
}

.level span {
  flex: 1;
  height: 13px;
  border-radius: 3px;
  background: linear-gradient(#1fa04a, #6ee08a);
}

.watermark {
  position: absolute;
  right: 8px;
  bottom: 15px;
  color: #1616e6;
  font: 29px/34px "Noto Serif CJK SC", "Noto Sans CJK SC", serif;
  text-shadow: 1px 1px #fff, -1px -1px #fff, 1px -1px #fff, -1px 1px #fff;
}
```
